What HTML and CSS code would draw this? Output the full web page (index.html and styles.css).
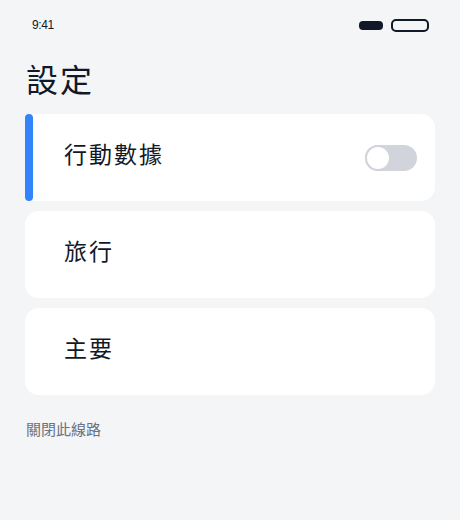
FILE: index.html
```html
<!DOCTYPE html>
<html lang="zh-Hant">
<head>
<meta charset="utf-8">
<title>設定</title>
<link rel="stylesheet" href="styles.css">
</head>
<body>
<div class="screen">
  <div class="status-bar">
    <span class="time">9:41</span>
    <div class="status-icons">
      <span class="pill-filled"></span>
      <span class="pill-outline"></span>
    </div>
  </div>
  <h1 class="title">設定</h1>
  <div class="list">
    <div class="card card-active">
      <span class="card-label">行動數據</span>
      <span class="toggle"><span class="knob"></span></span>
    </div>
    <div class="card">
      <span class="card-label">旅行</span>
    </div>
    <div class="card">
      <span class="card-label">主要</span>
    </div>
  </div>
  <div class="footer-link">關閉此線路</div>
</div>
</body>
</html>
```
FILE: styles.css
```css
html, body {
  margin: 0;
  padding: 0;
  background: #f4f5f7;
}
body {
  font-family: "Noto Sans", "Noto Sans CJK TC", sans-serif;
  color: #111827;
}
.screen {
  padding: 0 25px;
}
.status-bar {
  display: flex;
  justify-content: space-between;
  align-items: center;
  height: 50px;
  padding-left: 7px;
  padding-right: 6px;
}
.time {
  font-family: "Liberation Sans", sans-serif;
  font-size: 12px;
  letter-spacing: -0.4px;
  color: #111827;
}
.status-icons {
  display: flex;
  align-items: center;
  gap: 8px;
}
.pill-filled {
  width: 24px;
  height: 9px;
  border-radius: 4px;
  background: #111827;
}
.pill-outline {
  width: 38px;
  height: 13px;
  box-sizing: border-box;
  border: 2px solid #111827;
  border-radius: 5px;
}
.title {
  margin: 8px 0 16px 1px;
  font-family: "Noto Sans CJK TC", sans-serif;
  font-size: 32px;
  font-weight: 400;
  line-height: 40px;
  letter-spacing: 2px;
}
.list {
  display: flex;
  flex-direction: column;
  gap: 10px;
}
.card {
  position: relative;
  height: 87px;
  box-sizing: border-box;
  background: #ffffff;
  border-radius: 14px;
  display: flex;
  align-items: center;
  justify-content: space-between;
  padding: 0 18px 9px 39px;
}
.card-active {
  border-top-left-radius: 4px;
  border-bottom-left-radius: 4px;
}
.card-active::before {
  content: "";
  position: absolute;
  left: 0;
  top: 0;
  bottom: 0;
  width: 8px;
  border-radius: 4px;
  background: #3384fb;
}
.card-active .toggle {
  margin-top: 9px;
}
.card-label {
  font-family: "Noto Sans CJK TC", sans-serif;
  font-size: 23px;
  line-height: 32px;
  letter-spacing: 2px;
  color: #111827;
}
.toggle {
  position: relative;
  width: 52px;
  height: 26px;
  border-radius: 13px;
  background: #d1d5db;
}
.knob {
  position: absolute;
  left: 0;
  top: 0;
  width: 26px;
  height: 26px;
  box-sizing: border-box;
  border-radius: 50%;
  background: #ffffff;
  border: 2px solid #d1d5db;
}
.footer-link {
  margin: 24px 0 0 1px;
  font-family: "Noto Sans CJK TC", sans-serif;
  font-size: 15px;
  line-height: 20px;
  color: #6b7280;
}
```
